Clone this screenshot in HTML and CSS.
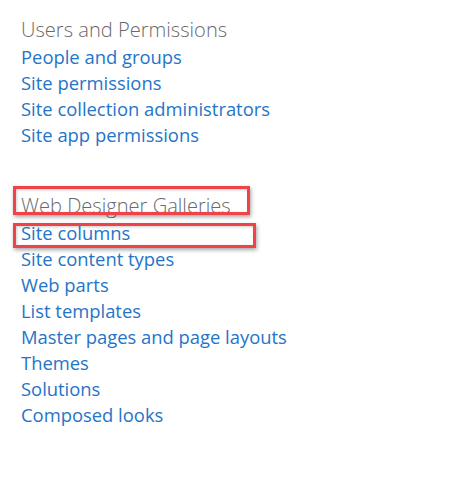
FILE: index.html
```html
<!DOCTYPE html>
<html>
<head>
<meta charset="utf-8">
<link rel="stylesheet" href="styles.css">
</head>
<body>
<div class="page">
  <section class="group">
    <div class="group-title">Users and Permissions</div>
    <ul class="links">
      <li><a href="#">People and groups</a></li>
      <li><a href="#">Site permissions</a></li>
      <li><a href="#">Site collection administrators</a></li>
      <li><a href="#">Site app permissions</a></li>
    </ul>
  </section>
  <section class="group">
    <div class="group-title"><span class="mark mark-title">Web Designer Galleries</span></div>
    <ul class="links">
      <li><a href="#" class="mark mark-link">Site columns</a></li>
      <li><a href="#">Site content types</a></li>
      <li><a href="#">Web parts</a></li>
      <li><a href="#">List templates</a></li>
      <li><a href="#">Master pages and page layouts</a></li>
      <li><a href="#">Themes</a></li>
      <li><a href="#">Solutions</a></li>
      <li><a href="#">Composed looks</a></li>
    </ul>
  </section>
</div>
</body>
</html>
```

FILE: styles.css
```css
html, body {
  margin: 0;
  background: #ffffff;
}
.page {
  padding: 14px 0 0 21px;
  font-family: "Open Sans", "Noto Sans", sans-serif;
}
.group + .group {
  margin-top: 42px;
}
.group-title {
  font-size: 20.1px;
  font-weight: 300;
  line-height: 28px;
  color: #6a6a6a;
  padding-top: 2px;
}
.links {
  list-style: none;
  margin: 0;
  padding: 0;
}
.links li {
  font-size: 18.4px;
  line-height: 26px;
}
.links a {
  color: #2474c8;
  font-weight: 400;
  text-decoration: none;
}
.mark {
  position: relative;
  display: inline-block;
}
.mark::after {
  content: "";
  position: absolute;
  left: -8px;
  border: 3px solid #f04347;
  box-shadow: 1px 2px 4px rgba(0, 0, 0, 0.35), inset 1px 1px 3px rgba(0, 0, 0, 0.2);
  box-sizing: border-box;
  pointer-events: none;
}
.mark-title::after {
  top: -6px;
  height: 29px;
  width: 237px;
}
.mark-link::after {
  top: 3px;
  height: 25px;
  width: 243px;
}
```
